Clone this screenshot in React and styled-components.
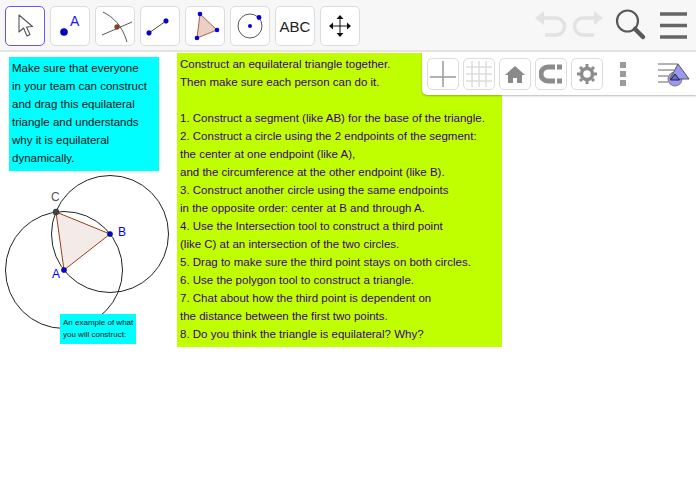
import React from "react";
import styled, { createGlobalStyle } from "styled-components";

const Global = createGlobalStyle`
  html, body { margin: 0; padding: 0; background: #fff; }
  body { font-family: "Liberation Sans", Arial, sans-serif; }
`;
const Page = styled.div`width: 696px; height: 500px; position: relative; overflow: hidden; background: #fff;`;
const Toolbar = styled.header`
  height: 52px; box-sizing: border-box; background: #f7f7f7; border-bottom: 2px solid #e4e4e4;
  display: flex; align-items: flex-start; justify-content: space-between; padding: 6px 8px 0 5px;
`;
const ToolGroup = styled.div`display: flex; gap: 5px;`;
const ToolButton = styled.div`
  width: 40px; height: 40px; box-sizing: border-box; background: #fff; border-radius: 5px;
  border: ${p => (p.$active ? "1.5px solid #6557ee" : "1px solid #dcdcdc")};
  display: flex; align-items: center; justify-content: center;
  color: #222; font-size: 15px; letter-spacing: 0;
`;
const ActionGroup = styled.div`display: flex; align-items: center; margin-top: -1px;`;
const Canvas = styled.main`position: relative; height: 448px;`;
const Note = styled.div`
  position: absolute; left: ${p => p.$x}px; top: ${p => p.$y}px; width: ${p => p.$w}px; height: ${p => p.$h}px;
  background: ${p => p.$bg}; color: ${p => p.$color}; font-size: ${p => p.$size}px; line-height: ${p => p.$lh}px;
  box-sizing: border-box; padding: ${p => p.$pad}; white-space: pre;
`;
const Drawing = styled.svg`position: absolute; left: 0; top: -52px; pointer-events: none;`;
const StylePanel = styled.div`
  position: absolute; left: 422px; top: 0; width: 274px; height: 43px; background: #fff; box-sizing: border-box;
  border-bottom-left-radius: 5px; box-shadow: 0 1px 2px rgba(0,0,0,.28);
  display: flex; align-items: flex-start; gap: 4px; padding: 6px 0 0 5px;
`;
const StyleButton = styled.div`
  width: 32px; height: 32px; box-sizing: border-box; border: 1px solid #dcdcdc; border-radius: 5px; background: #fff;
  display: flex; align-items: center; justify-content: center;
`;
const MoreDots = styled.div`
  width: 6px; height: 24px; margin: 4px 0 0 13px; display: flex; flex-direction: column; justify-content: space-between;
  & > i { display: block; height: 6px; background: #9b9b9b; }
`;
const ViewToggle = styled.svg`margin-left: 27px; margin-top: 2px;`;

const P = ({ x, y }) => <circle cx={x} cy={y} r="2.6" fill="#0000d8" stroke="#103" strokeWidth=".5" />;

const icons = [
  <svg width="20" height="28" viewBox="0 0 20 28"><path d="M4 3v17l4.5-4 3.5 8 3-1.500-3.500-7.500 6-.5z" fill="#fff" stroke="#555" strokeWidth="1.100" strokeLinejoin="round"/></svg>,
  <svg width="30" height="30" viewBox="0 0 30 30"><circle cx="9" cy="21" r="3.600" fill="#0000dc" stroke="#111" strokeWidth=".5"/><text x="15" y="15" fill="#1a1aee" fontSize="14" fontFamily="Liberation Sans">A</text></svg>,
  <svg width="34" height="34" viewBox="0 0 34 34"><path d="M4 27 32 7" stroke="none"/><path d="M4 27l30-13" fill="none" stroke="#444" strokeWidth=".9" transform="translate(0 -1)"/><path d="M5 3c10 5 19 13 24 30" fill="none" stroke="#444" strokeWidth=".9"/><circle cx="19" cy="18" r="2.400" fill="#a03c14" stroke="#444" strokeWidth=".5"/></svg>,
  <svg width="30" height="30" viewBox="0 0 30 30"><path d="M4 22 21 10" stroke="#333" strokeWidth=".9"/><circle cx="4" cy="22" r="2.400" fill="#0000dc" stroke="#223" strokeWidth=".4"/><circle cx="21" cy="10" r="2.400" fill="#0000dc" stroke="#223" strokeWidth=".4"/></svg>,
  <svg width="32" height="34" viewBox="0 0 32 34"><path d="M11 5 28 21 8 29z" fill="#e9cfc5" stroke="#a5502e" strokeWidth=".9"/><circle cx="11" cy="5" r="2.300" fill="#0000dc"/><circle cx="28" cy="21" r="2.300" fill="#0000dc"/><circle cx="8" cy="29" r="2.300" fill="#0000dc"/></svg>,
  <svg width="32" height="32" viewBox="0 0 32 32"><circle cx="16" cy="16" r="12" fill="none" stroke="#444" strokeWidth=".9"/><circle cx="16" cy="16" r="2" fill="#0000dc"/><circle cx="25" cy="7.500" r="2.400" fill="#0000dc"/></svg>,
  "ABC",
  <svg width="24" height="24" viewBox="0 0 24 24"><path d="M12 2v20M2 12h20" stroke="#111" strokeWidth="1"/><path d="M12 1l-3.500 4h7zM12 23l-3.500-4h7zM1 12l4-3.500v7zM23 12l-4-3.500v7z" fill="#111"/></svg>,
];

const lines = `Construct an equilateral triangle together.
Then make sure each person can do it.

1. Construct a segment (like AB) for the base of the triangle.
2. Construct a circle using the 2 endpoints of the segment:
the center at one endpoint (like A),
and the circumference at the other endpoint (like B).
3. Construct another circle using the same endpoints
in the opposite order: center at B and through A.
4. Use the Intersection tool to construct a third point
(like C) at an intersection of the two circles.
5. Drag to make sure the third point stays on both circles.
6. Use the polygon tool to construct a triangle.
7. Chat about how the third point is dependent on
the distance between the first two points.
8. Do you think the triangle is equilateral? Why?`;

export default function App() {
  return (
    <Page>
      <Global />
      <Toolbar>
        <ToolGroup>
          {icons.map((ic, i) => <ToolButton key={i} $active={i === 0}>{ic}</ToolButton>)}
        </ToolGroup>
        <ActionGroup>
          <svg width="154" height="40" viewBox="0 0 154 40">
            <g fill="none" stroke="#e2e2e2" strokeWidth="3.500">
              <path d="M8 13h14a8 8 0 0 1 0 17H11"/>
              <path d="M62 13H49a8 8 0 0 0 0 17h11"/>
            </g>
            <path d="M1 13l9-7v14z M69 13l-9-7v14z" fill="#e2e2e2"/>
            <circle cx="93.500" cy="16" r="10.500" fill="none" stroke="#595959" strokeWidth="2.200"/>
            <path d="M101 24l8 8" stroke="#595959" strokeWidth="4.500" strokeLinecap="round"/>
            <path d="M126 9h27M126 20.500h27M126 32h27" stroke="#666" strokeWidth="3.500"/>
          </svg>
        </ActionGroup>
      </Toolbar>
      <Canvas>
        <Note $x={9} $y={5} $w={150} $h={114} $bg="#00ffff" $color="#111" $size={11.5} $lh={18} $pad="2px 0 0 3px">{`Make sure that everyone
in your team can construct
and drag this equilateral
triangle and understands
why it is equilateral
dynamically.`}</Note>
        <Note $x={177} $y={1} $w={325} $h={294} $bg="#bfff00" $color="#3c0078" $size={11.5} $lh={18} $pad="2px 0 0 3px">{lines}</Note>
        <Drawing width="180" height="350" viewBox="0 0 180 350">
          <path d="M56 212 110 234 64 270z" fill="#f3ebe8" stroke="#9c3f14" strokeWidth="1"/>
          <circle cx="64" cy="270" r="58.500" fill="none" stroke="#222" strokeWidth="1"/>
          <circle cx="110" cy="234" r="58.500" fill="none" stroke="#222" strokeWidth="1"/>
          <P x={110} y={234}/>
          <P x={64} y={270}/>
          <circle cx="56" cy="212" r="3" fill="#444" stroke="#222" strokeWidth=".5"/>
          <text x="51" y="201" fontSize="12" fill="#555" fontFamily="Liberation Sans">C</text>
          <text x="118" y="236" fontSize="12" fill="#0000ff" fontFamily="Liberation Sans">B</text>
          <text x="52" y="278" fontSize="12" fill="#0000ff" fontFamily="Liberation Sans">A</text>
        </Drawing>
        <Note $x={60} $y={262} $w={76} $h={30} $bg="#00ffff" $color="#111" $size={8} $lh={12} $pad="3px 0 0 3px">{`An example of what
you will construct:`}</Note>
        <StylePanel>
          <StyleButton>
            <svg width="26" height="26" viewBox="0 0 26 26"><path d="M13 0v26M0 16h26" stroke="#999" strokeWidth="1.500"/></svg>
          </StyleButton>
          <StyleButton>
            <svg width="28" height="28" viewBox="0 0 28 28"><path d="M7 1v26M14 1v26M21 1v26M1 7h26M1 14h26M1 21h26" stroke="#ddd" strokeWidth="1.500"/></svg>
          </StyleButton>
          <StyleButton>
            <svg width="20" height="18" viewBox="0 0 20 18"><path d="M10 1 0 10h3v8h5v-5h4v5h5v-8h3z" fill="#8a8a8a"/></svg>
          </StyleButton>
          <StyleButton>
            <svg width="24" height="20" viewBox="0 0 24 20"><path d="M16 3H9a7 7 0 0 0 0 14h7" fill="none" stroke="#8c8c8c" strokeWidth="5"/><path d="M18 .5h5v5h-5zM18 14.500h5v5h-5z" fill="#8c8c8c"/></svg>
          </StyleButton>
          <StyleButton>
            <svg width="20" height="20" viewBox="0 0 20 20"><circle cx="10" cy="10" r="5.500" fill="none" stroke="#8c8c8c" strokeWidth="3.500"/><path d="M10 0v20M0 10h20M3 3l14 14M17 3 3 17" stroke="#8c8c8c" strokeWidth="3" strokeDasharray="3 14 3 0"/></svg>
          </StyleButton>
          <MoreDots><i/><i/><i/></MoreDots>
          <ViewToggle width="34" height="28" viewBox="0 0 34 28">
            <path d="M1 4h20M1 10h16M1 16h10M1 22h10" stroke="#999" strokeWidth="1.500"/>
            <circle cx="18" cy="19" r="7" fill="#9a9af0" stroke="#777" strokeWidth="1"/>
            <path d="M21 4 32 19H13z" fill="#9a9af0" stroke="#555" strokeWidth="1"/>
            <path d="M18 14l4.500 6h-9z" fill="#6a6ae0" stroke="#222" strokeWidth="1"/>
          </ViewToggle>
        </StylePanel>
      </Canvas>
    </Page>
  );
}
